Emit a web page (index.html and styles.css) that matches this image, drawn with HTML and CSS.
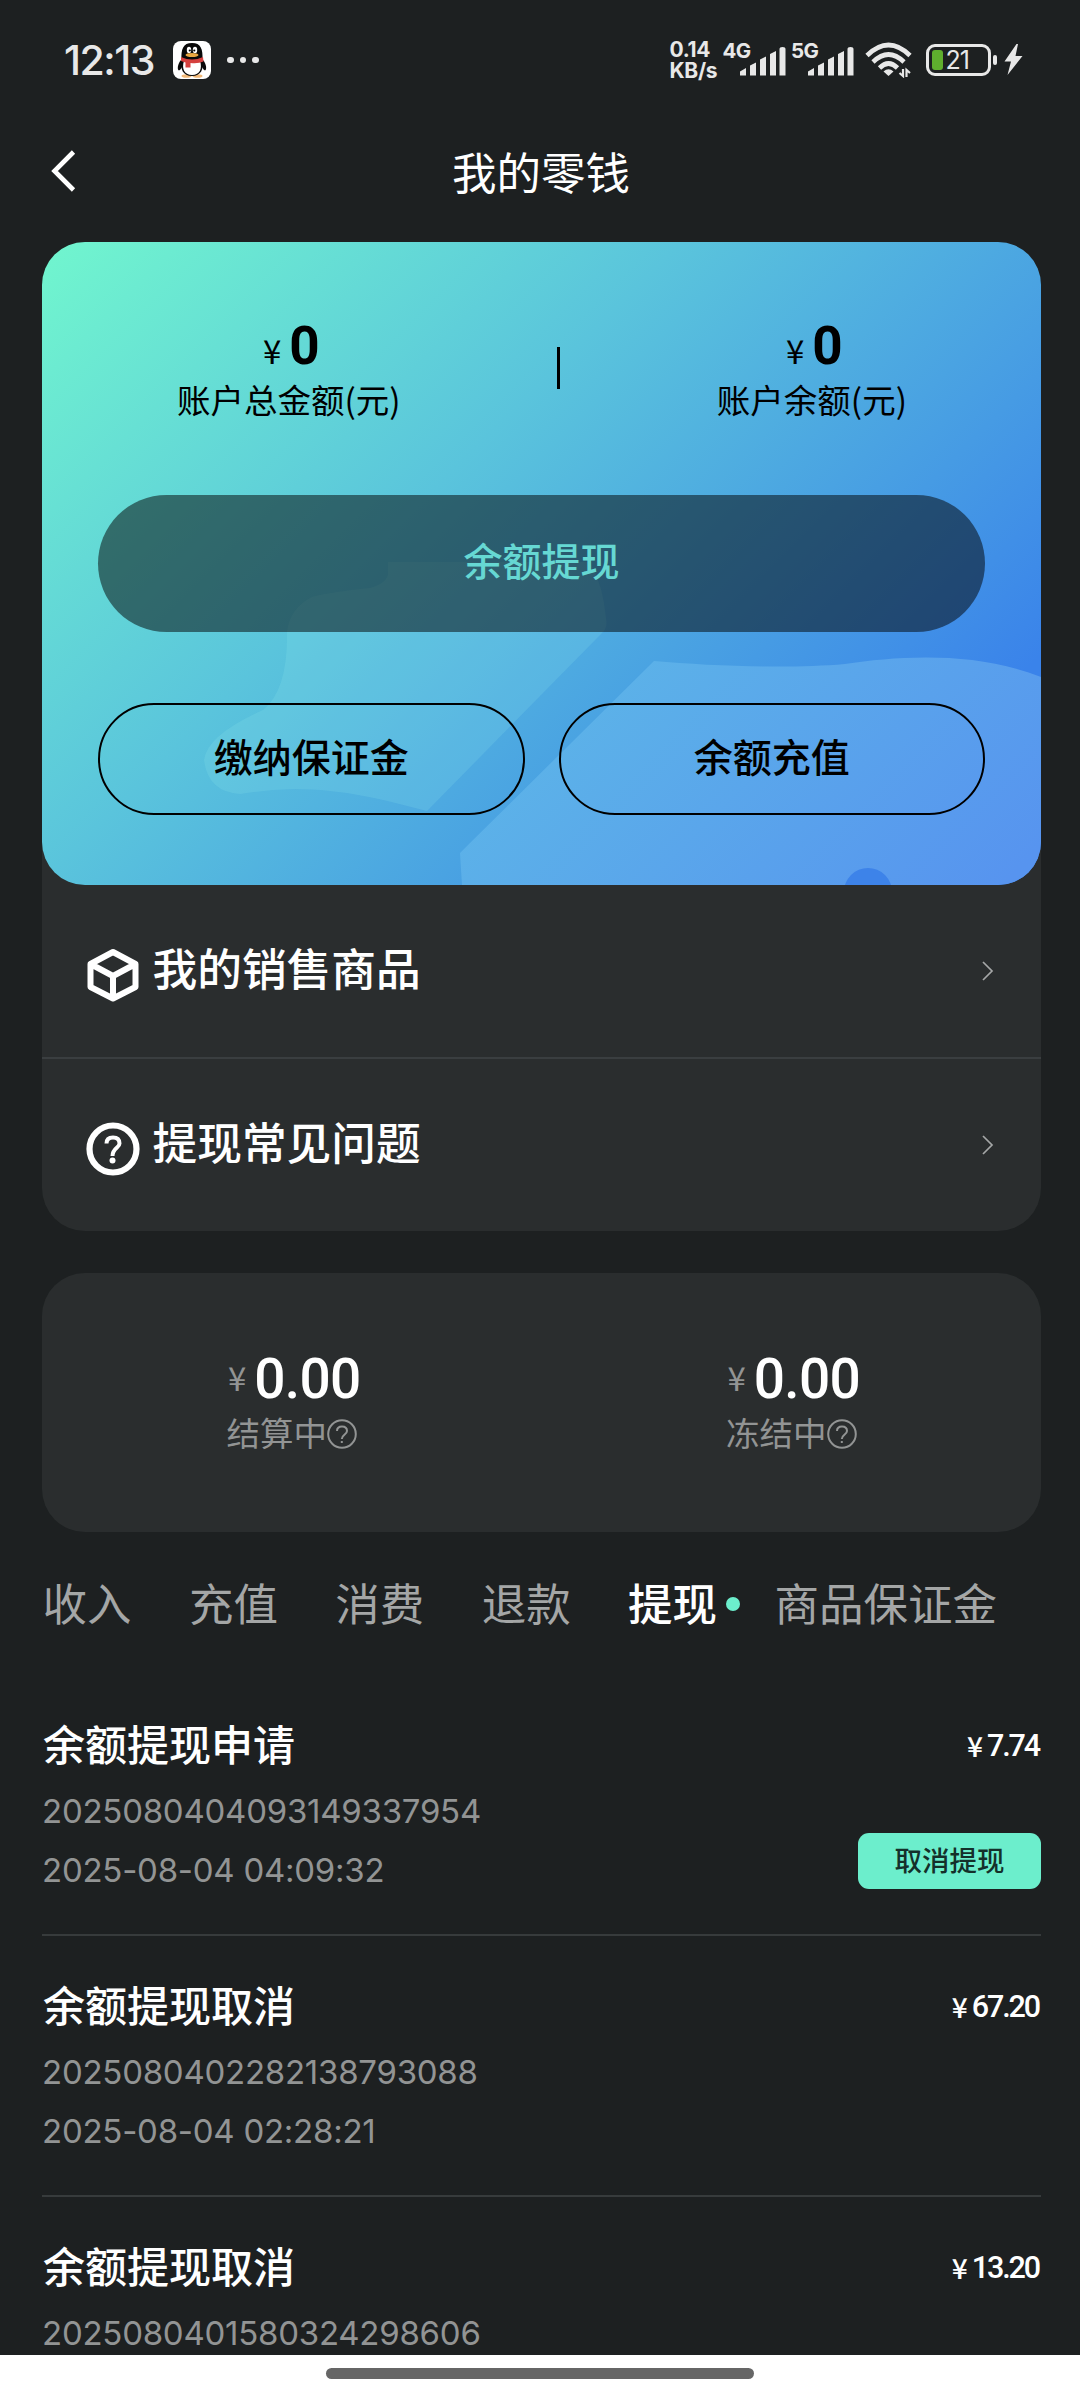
FILE: index.html
```html
<!DOCTYPE html>
<html lang="zh-CN">
<head>
<meta charset="utf-8">
<title>我的零钱</title>
<link rel="stylesheet" href="styles.css">
</head>
<body>
<div class="screen">
  <div class="status">
    <span class="clock">12:13</span>
    <svg class="qq" width="38" height="38" viewBox="0 0 38 38">
      <rect width="38" height="38" rx="8" fill="#fff"/>
      <ellipse cx="13.500" cy="35" rx="5" ry="1.800" fill="#f2b978"/><ellipse cx="24.500" cy="35" rx="5" ry="1.800" fill="#f2b978"/>
      <path d="M8 19C4.500 23 4 29 6 29.500C7 29 8 28 8.500 26.500L29.500 26.500C30 28 31 29 32 29.500C34 29 33.500 23 30 19Z" fill="#090909"/>
      <path d="M8.500 19C8 8 10 2 19 2S30 8 29.500 19C31 28 28 35 19 35S7 28 8.500 19Z" fill="#090909"/>
      <path d="M11 20H27C29.500 27 27 34 19 34S8.500 27 11 20Z" fill="#fff"/>
      <ellipse cx="16" cy="9" rx="2.200" ry="3.200" fill="#fff"/><ellipse cx="22" cy="9" rx="2.200" ry="3.200" fill="#fff"/>
      <circle cx="16.800" cy="9.500" r="1.100"/><circle cx="21.300" cy="9.500" r="1.100"/>
      <ellipse cx="19" cy="14" rx="6.500" ry="2" fill="#e9a742"/>
      <path d="M8 16Q19 21 30 16L30.500 20.500Q25 23 17.500 22V26.500H12.500V21.500L8 20Z" fill="#d5403e"/>
    </svg>
    <span class="more"><i></i><i></i><i></i></span>
    <span class="speed"><b>0.14</b><b>KB/s</b></span>
    <span class="signal"><b>4G</b>
      <svg width="46" height="30" viewBox="0 0 46 30"><path d="M0 29.500V25.500L6 22V29.500ZM10 29.500V19.500L16 16.500V29.500ZM20 29.500V13.500L26 10.500V29.500ZM30 29.500V8L36 5V29.500ZM39.500 29.500V3Q39.500 1 42.500 1T45.500 3V29.500Z"/></svg></span>
    <span class="signal"><b>5G</b>
      <svg width="46" height="30" viewBox="0 0 46 30"><path d="M0 29.500V25.500L6 22V29.500ZM10 29.500V19.500L16 16.500V29.500ZM20 29.500V13.500L26 10.500V29.500ZM30 29.500V8L36 5V29.500ZM39.500 29.500V3Q39.500 1 42.500 1T45.500 3V29.500Z"/></svg></span>
    <svg class="wifi" width="48" height="36" viewBox="0 0 48 36">
      <g fill="none" stroke="#e8e8e8" stroke-width="4.600"><path d="M2 13.500Q23.500 -7.500 45 13.500"/><path d="M8 20Q23.500 5 39 20"/><path d="M14.500 26Q23.500 17 32.500 26"/></g>
      <path d="M23.500 34L18.500 29.500Q23.500 25 28.500 29.500Z" fill="#e8e8e8"/>
      <path d="M38 27V34L34.500 31M41.500 35V28L45 31" fill="none" stroke="#e8e8e8" stroke-width="2.200"/>
    </svg>
    <span class="battery"><span class="charge"></span><span class="percent">21</span></span><span class="nub"></span>
    <svg class="bolt" width="19" height="32" viewBox="0 0 19 32"><path d="M12.500 0L0.500 17.500H7L3.500 31L18.500 12H11.500L14 0Z" fill="#e8e8e8"/></svg>
  </div>

  <div class="nav">
    <svg class="back" width="28" height="44" viewBox="0 0 28 44"><path d="M23.500 3L4.500 22L23.500 41" fill="none" stroke="#fff" stroke-width="4.600"/></svg>
    <h1>我的零钱</h1>
  </div>

  <section class="wallet">
    <svg class="art" width="999" height="643" viewBox="42 242 999 643">
      <defs>
        <linearGradient id="wave" gradientUnits="userSpaceOnUse" x1="534" y1="734" x2="844" y2="1044">
          <stop offset="0" stop-color="#5cb3e8"/><stop offset="1" stop-color="#5794ef"/>
        </linearGradient>
      </defs>
      <path class="blob" d="M388 562V574Q387 583 370 588Q330 592 312 597Q290 608 287 632Q288 690 263 710Q207 735 204 760Q208 792 240 794Q265 790 293 789C345 789 385 800 427 811L602 633Q608 628 606 618Q603 585 590 562Z"/>
      <path fill="url(#wave)" d="M654 661C710 666 790 669 845 664C900 656 975 651 1041 677V885H462L460 853L470 843Z"/>
      <circle cx="868" cy="892" r="24"/>
    </svg>
    <div class="totals">
      <div class="total"><p class="sum"><i>¥</i><b>0</b></p><p class="label">账户总金额(元)</p></div>
      <span class="bar"></span>
      <div class="total"><p class="sum"><i>¥</i><b>0</b></p><p class="label">账户余额(元)</p></div>
    </div>
    <div class="withdraw">余额提现</div>
    <div class="actions"><div class="pill">缴纳保证金</div><div class="pill">余额充值</div></div>
  </section>

  <section class="menu">
    <div class="row">
      <svg width="54" height="54" viewBox="0 0 54 54"><path d="M27 4L49.500 16V39L27 50.500L4.500 39V16ZM4.500 16L27 28L49.500 16M27 28V50" fill="none" stroke="#fff" stroke-width="6" stroke-linejoin="round"/></svg>
      <span class="row-name">我的销售商品</span>
      <svg class="go" width="14" height="22" viewBox="0 0 14 22"><path d="M2 2L11 11L2 20" fill="none" stroke="#a5a7a7" stroke-width="1.700"/></svg>
    </div>
    <div class="row">
      <svg width="54" height="54" viewBox="0 0 54 54"><circle cx="27" cy="27" r="23.500" fill="none" stroke="#fff" stroke-width="6.200"/><path d="M20.500 21.500Q20.500 15.500 27 15.500T33.500 21.500C33.500 26 26.500 26 26.500 34" fill="none" stroke="#fff" stroke-width="4"/><circle cx="26.500" cy="38.500" r="3" fill="#fff"/></svg>
      <span class="row-name">提现常见问题</span>
      <svg class="go" width="14" height="22" viewBox="0 0 14 22"><path d="M2 2L11 11L2 20" fill="none" stroke="#a5a7a7" stroke-width="1.700"/></svg>
    </div>
  </section>

  <section class="pending">
    <div class="amount"><p class="figure"><i>¥</i><b>0.00</b></p><p class="note">结算中<svg width="30" height="30" viewBox="0 0 30 30"><circle cx="15" cy="15" r="13.800"/><path d="M10 12Q10 7.500 15 7.500T20 12C20 15.500 14.800 15.500 14.800 20M14.800 22V24"/></svg></p></div>
    <div class="amount"><p class="figure"><i>¥</i><b>0.00</b></p><p class="note">冻结中<svg width="30" height="30" viewBox="0 0 30 30"><circle cx="15" cy="15" r="13.800"/><path d="M10 12Q10 7.500 15 7.500T20 12C20 15.500 14.800 15.500 14.800 20M14.800 22V24"/></svg></p></div>
  </section>

  <nav class="tabs">
    <span>收入</span><span>充值</span><span>消费</span><span>退款</span><span class="on">提现</span><span>商品保证金</span>
  </nav>

  <section class="list">
    <article class="item">
      <div class="info"><h2>余额提现申请</h2><p>2025080404093149337954</p><p>2025-08-04 04:09:32</p></div>
      <div class="side"><span class="price"><i>¥</i><b>7.74</b></span><span class="cancel">取消提现</span></div>
    </article>
    <article class="item">
      <div class="info"><h2>余额提现取消</h2><p>2025080402282138793088</p><p>2025-08-04 02:28:21</p></div>
      <div class="side"><span class="price"><i>¥</i><b>67.20</b></span></div>
    </article>
    <article class="item">
      <div class="info"><h2>余额提现取消</h2><p>2025080401580324298606</p></div>
      <div class="side"><span class="price"><i>¥</i><b>13.20</b></span></div>
    </article>
  </section>

  <div class="home"><span></span></div>
</div>
</body>
</html>
```
FILE: styles.css
```css
* { box-sizing: border-box; margin: 0; padding: 0; }
i { font-style: normal; }
body { background: #1d2021; }
svg { display: block; flex: none; }

.screen {
  width: 1080px;
  height: 2400px;
  display: flex;
  flex-direction: column;
  overflow: hidden;
  color: #fff;
  font-family: "Noto Sans CJK SC", sans-serif;
}

/* status bar */
.status {
  flex: none;
  display: flex;
  align-items: center;
  height: 120px;
  padding-left: 64px;
  color: #e8e8e8;
  font-family: Inter, sans-serif;
}
.clock { width: 109px; font-size: 41px; font-weight: 500; line-height: 50px; letter-spacing: -1.5px; }
.more { display: flex; gap: 6px; margin-left: 16px; }
.more i { width: 6.500px; height: 6.500px; border-radius: 50%; background: #e8e8e8; }
.speed { display: flex; flex-direction: column; width: 53px; margin-left: 411px; font-size: 21px; line-height: 21px; letter-spacing: -.3px; }
.speed b, .signal b { font-weight: 700; }
.signal { display: flex; align-items: flex-start; height: 36px; width: 68.500px; }
.signal b { width: 17px; white-space: nowrap; font-size: 20.500px; line-height: 22px; letter-spacing: -.6px; margin-top: -2px; }
.signal svg { margin-top: 4px; fill: #e8e8e8; }
.wifi { margin-left: 5px; }
.battery { position: relative; width: 65px; height: 32px; margin-left: 13px; border: 3px solid #e8e8e8; border-radius: 9px; }
.charge { display: block; width: 11px; height: 20px; margin: 3px 0 0 3px; border-radius: 3px; background: #5fae2e; }
.percent { position: absolute; left: 17px; top: 0; font-size: 25px; line-height: 26px; letter-spacing: -1px; }
.nub { width: 4px; height: 10px; margin-left: 2px; border-radius: 2px; background: #e8e8e8; }
.bolt { margin-left: 7px; }

/* title bar */
.nav { flex: none; display: flex; align-items: center; height: 102px; padding-left: 50px; }
.nav h1 { flex: 1; margin-left: -78px; padding-left: 2px; text-align: center; font-size: 44.500px; font-weight: 400; line-height: 60px; }

/* balance card */
.wallet {
  position: relative;
  z-index: 1;
  flex: none;
  width: 999px;
  height: 643px;
  margin: 20px 0 0 42px;
  padding: 76px 56px 0;
  border-radius: 43px;
  overflow: hidden;
  background: linear-gradient(135deg, #71f6ce 0%, #5ac4dc 39%, #4aa3e2 63%, #3a83ea 86%);
  color: #000;
}
.art { position: absolute; left: 0; top: 0; }
.blob { fill: rgba(150, 235, 240, .17); }
.art circle { fill: #3d83e9; }
.totals { position: relative; display: flex; justify-content: space-around; height: 177px; }
.total { display: flex; flex-direction: column; align-items: center; }
.sum { display: flex; align-items: baseline; height: 59px; line-height: 56px; gap: 8px; padding-left: 6px; }
.sum i { font-size: 33px; }
.sum b { font: 700 53px/56px Roboto, sans-serif; }
.label { font-size: 33.500px; line-height: 44px; padding-left: 1px; }
.bar { width: 3px; height: 42px; margin-top: 29px; background: #000; }
.withdraw {
  position: relative;
  height: 137px;
  border-radius: 69px;
  background: rgba(0, 0, 0, .5);
  color: #66d8d3;
  text-align: center;
  font-size: 39px;
  font-weight: 500;
  line-height: 129px;
}
.actions { position: relative; display: flex; gap: 34px; margin-top: 71px; }
.pill { flex: 1; height: 112px; border: 2px solid #000; border-radius: 56px; text-align: center; font-size: 39px; font-weight: 500; line-height: 100px; }

/* menu under the card */
.menu { flex: none; width: 999px; height: 389px; margin: -43px 0 0 42px; padding-top: 43px; border-radius: 0 0 43px 43px; background: #2a2d2e; }
.row { display: flex; align-items: center; height: 172px; padding: 8px 46px 0 44px; }
.row + .row { height: 174px; border-top: 2px solid #3a3e40; }
.row-name { flex: 1; margin: -16px 0 0 12.500px; font-size: 44.700px; font-weight: 500; line-height: 60px; }
.go { margin-top: -8px; }

/* pending amounts */
.pending { flex: none; display: flex; width: 999px; height: 259px; margin: 42px 0 0 42px; padding-top: 76px; border-radius: 43px; background: #2a2d2e; color: #929494; }
.amount { flex: 1; display: flex; flex-direction: column; align-items: center; }
.figure { display: flex; align-items: center; gap: 8px; height: 60px; padding-left: 5px; }
.figure i { font-size: 33px; line-height: 50px; margin-top: -5px; }
.figure b { color: #fff; font: 500 55px/60px Roboto, sans-serif; letter-spacing: -.7px; }
.note { display: flex; align-items: center; height: 46px; font-size: 33.500px; line-height: 46px; }
.note svg { margin-top: 3px; fill: none; stroke: #929494; stroke-width: 2; }

/* tabs */
.tabs { flex: none; display: flex; height: 60px; margin: 40px 0 0 42.500px; font-size: 44.500px; line-height: 60px; color: #a4a6a6; white-space: nowrap; }
.tabs span { flex: none; width: 146.400px; }
.tabs .on { display: flex; align-items: center; color: #fff; font-weight: 500; }
.tabs .on::after { content: ""; width: 14px; height: 14px; margin: 4px 0 0 9px; border-radius: 50%; background: #6ceecc; }

/* records */
.list { flex: 1; min-height: 0; overflow: hidden; margin: 43px 39px 0 42px; }
.item { display: flex; justify-content: space-between; height: 261px; border-bottom: 2px solid #373b3c; padding-top: 38px; }
.info { padding-left: 1px; }
.info h2 { font-size: 42px; font-weight: 500; line-height: 60px; height: 69px; }
.info p { height: 59px; font: 400 33px/59px Inter, sans-serif; letter-spacing: -.25px; margin-left: -1px; color: #929494; }
.side { display: flex; flex-direction: column; align-items: flex-end; }
.price { display: flex; align-items: center; gap: 4px; height: 66px; }
.price i { font-size: 28px; font-weight: 500; line-height: 40px; margin-top: -3px; }
.price b { font: 500 30.500px/40px Roboto, sans-serif; letter-spacing: -2.1px; padding-right: 2px; }
.cancel { width: 183px; height: 56px; margin-top: 54px; border-radius: 11px; background: #6ceecc; color: #14302a; text-align: center; font-size: 27.500px; font-weight: 500; line-height: 52px; }

/* gesture bar */
.home { flex: none; height: 45px; padding-top: 13px; background: #fff; }
.home span { display: block; width: 428px; height: 11px; margin: 0 auto; border-radius: 6px; background: #666; }
```
